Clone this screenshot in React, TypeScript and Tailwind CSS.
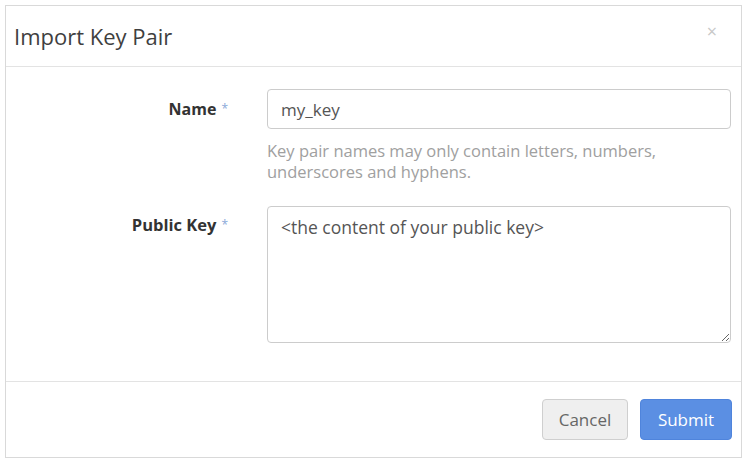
import { useState } from "react";

const font = { fontFamily: '"Open Sans", "Noto Sans", Arial, sans-serif' };

function Req() {
  return <span className="ml-[5px] align-top text-[12px] font-normal text-[#8aa8d8]">*</span>;
}

export default function App() {
  const [name, setName] = useState("my_key");
  const [key, setKey] = useState("<the content of your public key>");

  return (
    <div className="h-[459px] w-[748px] bg-white p-[5px]" style={font}>
      <div className="flex h-[453px] w-[737px] flex-col border border-[#d9d9d9] bg-white">
        <div className="flex h-[61px] shrink-0 items-center justify-between border-b border-[#e3e3e3] pl-[8px] pr-[24px]">
          <h4 className="text-[22px] font-normal text-[#3f3f3f]">Import Key Pair</h4>
          <button className="mb-[10px] text-[18px] leading-none text-[#c8c8c8]">×</button>
        </div>

        <div className="flex-1 pt-[22px]">
          <div className="flex">
            <label className="w-[222px] shrink-0 pt-[8px] text-right text-[16px] font-bold leading-[24px] text-[#333]">
              Name
              <Req />
            </label>
            <div className="ml-[39px] mr-[10px] flex-1">
              <input
                value={name}
                onChange={(e) => setName(e.target.value)}
                className="h-[40px] w-full rounded-[4px] border border-[#cccccc] px-[13px] text-[17px] text-[#555] outline-none"
              />
              <p className="mt-[11px] text-[16.5px] leading-[21px] text-[#a0a0a0]">
                Key pair names may only contain letters, numbers,
                <br />
                underscores and hyphens.
              </p>
            </div>
          </div>

          <div className="mt-[24px] flex">
            <label className="w-[222px] shrink-0 pt-[7px] text-right text-[16.5px] font-bold leading-[24px] text-[#333]">
              Public Key
              <Req />
            </label>
            <div className="ml-[39px] mr-[10px] flex-1">
              <textarea
                value={key}
                onChange={(e) => setKey(e.target.value)}
                className="block h-[137px] w-full rounded-[4px] border border-[#cccccc] px-[13px] pt-[8px] text-[17.5px] leading-[24px] text-[#555] outline-none"
              />
            </div>
          </div>
        </div>

        <div className="flex h-[76px] shrink-0 items-center justify-end gap-[12px] border-t border-[#e3e3e3] pr-[9px]">
          <button className="h-[41px] w-[86px] rounded-[4px] border border-[#cfcfcf] bg-[#efefef] text-[17px] text-[#666]">
            Cancel
          </button>
          <button className="h-[41px] w-[92px] rounded-[4px] border border-[#4f84dc] bg-[#5b8fe3] text-[17px] text-white">
            Submit
          </button>
        </div>
      </div>
    </div>
  );
}
